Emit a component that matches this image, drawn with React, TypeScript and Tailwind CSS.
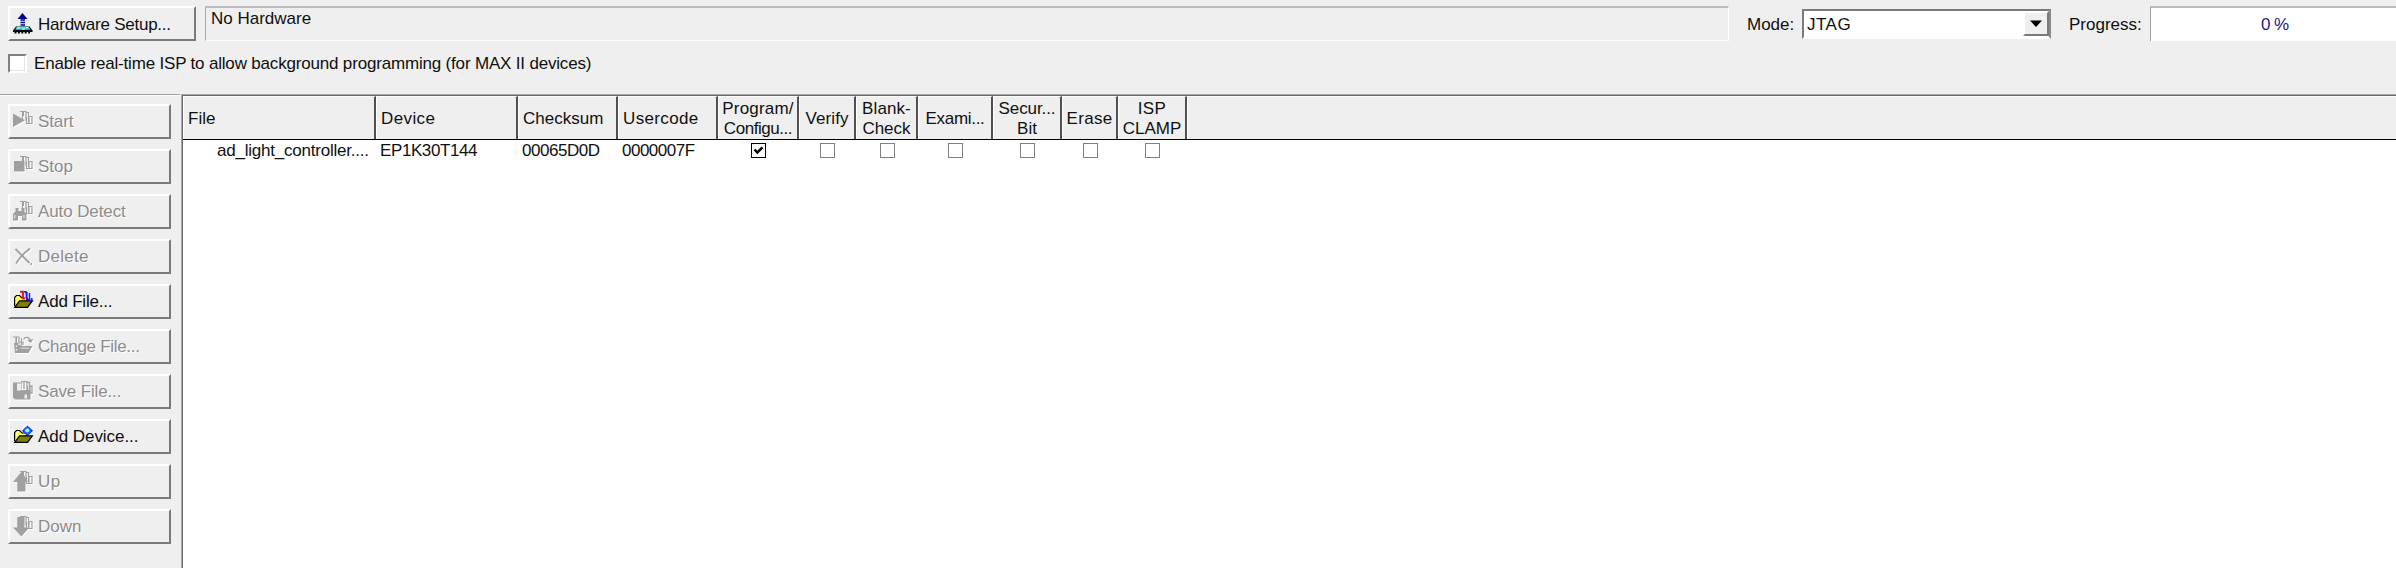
import React from "react";

const raised =
  "border-2 border-t-white border-l-white border-r-[#7a7a7a] border-b-[#7a7a7a]";
const G = "#a0a0a0";

function ChipLegs() {
  return (
    <path
      d="M7 1.500H10.500V6M9.500 1.500V10M10 1.500H13V10.500M13 2.500H15.500V12M13.500 7V13.500H16V6.500H19V13.500H16.500"
      fill="none"
      stroke={G}
      strokeWidth="1.200"
    />
  );
}

function FolderBase() {
  return (
    <>
      <path d="M1.600 16V7.500L3.500 5.500H6.500L9 8H14V11" fill="#ffff66" stroke="#000" strokeWidth="1.200" />
      <path d="M1.800 17.400L6.500 10.800H19.300L14.500 17.400Z" fill="#808000" stroke="#000" strokeWidth="1.300" />
    </>
  );
}

function Icon({ name }: { name: string }) {
  const disabled = !["hardware", "addFile", "addDevice"].includes(name);
  return (
    <svg
      width="20"
      height="23"
      viewBox="0 0 20 23"
      className={disabled ? "shrink-0 overflow-visible drop-shadow-[1px_1px_0_#ffffff]" : "shrink-0 overflow-visible"}
    >
      {name === "hardware" && (
        <>
          <path d="M9.500 1L14.500 7H4.500Z" fill="#000090" />
          <path d="M7.500 8H12M7.500 10.500H12M7.500 13H12" stroke="#000090" strokeWidth="1.300" />
          <path d="M0 18.500L3 14.500H16.500L19.500 18.500V20H0Z" fill="#000" />
          <path d="M2 17.800L4 14.800H15.500L17.500 17.800Z" fill="#30e0e8" />
          <path d="M4 16H7M9 17H12M13 15.500H15" stroke="#d8ffff" strokeWidth="1.200" />
          <path d="M1.500 20.500H18.500" stroke="#000" strokeWidth="2" strokeDasharray="2 1.400" />
        </>
      )}
      {name === "start" && (
        <>
          <path d="M0 3.500L12 10.300L0 17Z" fill={G} />
          <ChipLegs />
        </>
      )}
      {name === "stop" && (
        <>
          <path d="M1 6H11.500V16.500H1Z" fill={G} />
          <ChipLegs />
        </>
      )}
      {name === "detect" && (
        <>
          <path d="M2.500 8H5.500V11H8.500V8H11.500V11.500L13.500 14V20.500H9V16H5V20.500H0V14L2.500 11.500Z" fill={G} />
          <path d="M1.800 15V18.500M11 15V18.500" stroke="#efefef" strokeWidth="1" />
          <ChipLegs />
        </>
      )}
      {name === "delete" && (
        <path d="M2.500 4L16.500 18M17 3.500C11 8 7 12 3 18.500M17.500 19H19" fill="none" stroke={G} strokeWidth="1.800" />
      )}
      {name === "addFile" && (
        <>
          <FolderBase />
          <path d="M7 1.700H10V8.500H12" fill="none" stroke="#f01020" strokeWidth="1.900" />
          <path d="M11 1.700H13V8M14 2V9.500H16M16.500 3V10.500H18.800V8" fill="none" stroke="#1818ff" strokeWidth="1.500" />
          <path d="M12.300 3.500V9M15.200 3V8" stroke="#b8c0ff" strokeWidth="0.900" />
        </>
      )}
      {name === "addDevice" && (
        <>
          <FolderBase />
          <path d="M14.500 0.800L20 5.800L14.500 10.800L9 5.800Z" fill="#0828d8" />
          <circle cx="14.500" cy="5.800" r="3.700" fill="#1060ff" />
          <circle cx="14.300" cy="5.500" r="2.100" fill="#90f8ff" />
        </>
      )}
      {name === "change" && (
        <>
          <path d="M1 8H5V10H8V11H19.500L15.500 18H2Z" fill={G} />
          <path d="M0 2H3V8M3.500 2V9M6 2V9.500M3 2H6.500M8.500 3V10.500M6 7H10V10" fill="none" stroke={G} strokeWidth="1.200" />
          <path d="M10.500 4.500C12 1.500 16.500 1.500 17.500 6M15 5L17.700 7L19.500 4" fill="none" stroke={G} strokeWidth="1.300" />
          <path d="M3.500 10.500V12M3.500 14V15.500" stroke="#f4f4f4" strokeWidth="1.400" />
          <path d="M7.500 13.200H16" stroke="#efefef" strokeWidth="0.800" />
        </>
      )}
      {name === "save" && (
        <>
          <path d="M0 2.500H9V10H17.500V19.500H2L0 17.500Z" fill={G} />
          <path d="M4 3.500H8.500V10.500H4Z" fill="#efefef" />
          <path d="M11.500 14.500H14V18.500H11.500Z" fill="#efefef" />
          <path d="M8 1.700H11V9M11 1.700H14V10M14 2.500H16.500V12M14.500 6V12.500H17V6H19V13H17.500" fill="none" stroke={G} strokeWidth="1.300" />
        </>
      )}
      {name === "up" && (
        <>
          <path d="M8.500 1.800L15 11.500H12.500V21.500H4.300V12H0Z" fill={G} />
          <ChipLegs />
        </>
      )}
      {name === "down" && (
        <>
          <path d="M4.300 2H11.500V12.500H16.500L8.300 21.500L0 12.500H4.300Z" fill={G} />
          <ChipLegs />
        </>
      )}
    </svg>
  );
}

type Action = { label: string; icon: string; track: string; enabled?: boolean };

const actions: Action[] = [
  { label: "Start", icon: "start", track: "tracking-[-0.1px]" },
  { label: "Stop", icon: "stop", track: "tracking-[0px]" },
  { label: "Auto Detect", icon: "detect", track: "tracking-[-0.1px]" },
  { label: "Delete", icon: "delete", track: "tracking-[0.25px]" },
  { label: "Add File...", icon: "addFile", track: "tracking-[-0.2px]", enabled: true },
  { label: "Change File...", icon: "change", track: "tracking-[-0.3px]" },
  { label: "Save File...", icon: "save", track: "tracking-[-0.15px]" },
  { label: "Add Device...", icon: "addDevice", track: "tracking-[-0.05px]", enabled: true },
  { label: "Up", icon: "up", track: "tracking-[0.5px]" },
  { label: "Down", icon: "down", track: "tracking-[0px]" },
];

function ActionButton({ label, icon, track, enabled }: Action) {
  return (
    <button
      disabled={!enabled}
      className={`flex h-[35px] w-[163px] items-start gap-[5px] pl-[3px] text-left ${raised} ${
        enabled ? "text-[#101010]" : "text-[#8c8c8c] [text-shadow:1px_1px_0_#ffffff]"
      }`}
    >
      <span className="mt-1 block">
        <Icon name={icon} />
      </span>
      <span className={`mt-[5px] ${track}`}>{label}</span>
    </button>
  );
}

const grid =
  "grid grid-cols-[193px_142px_100px_100px_81px_57px_62px_75px_69px_56px_69px_1fr]";

const columns = [
  { lines: ["File"], align: "justify-start pl-1", track: ["tracking-[0px]"] },
  { lines: ["Device"], align: "justify-start pl-1", track: ["tracking-[0.4px]"] },
  { lines: ["Checksum"], align: "justify-start pl-1", track: ["tracking-[0px]"] },
  { lines: ["Usercode"], align: "justify-start pl-1", track: ["tracking-[0.35px]"] },
  { lines: ["Program/", "Configu..."], align: "justify-center", track: ["tracking-[0.2px]", "tracking-[-0.45px]"] },
  { lines: ["Verify"], align: "justify-center", track: ["tracking-[0.1px]"] },
  { lines: ["Blank-", "Check"], align: "justify-center", track: ["tracking-[0.1px]", "tracking-[0px]"] },
  { lines: ["Exami..."], align: "justify-center", track: ["tracking-[-0.3px]"] },
  { lines: ["Secur...", "Bit"], align: "justify-center", track: ["tracking-[-0.1px]", "tracking-[0px]"] },
  { lines: ["Erase"], align: "justify-center", track: ["tracking-[0.3px]"] },
  { lines: ["ISP", "CLAMP"], align: "justify-center", track: ["tracking-[0.4px]", "tracking-[0px]"] },
];

function Check({ on = false }: { on?: boolean }) {
  return (
    <div className="flex h-[21px] items-center justify-center">
      <div className={`flex size-[15px] items-center justify-center border bg-white ${on ? "border-black" : "border-[#808080]"}`}>
        {on && (
          <svg width="11" height="11" viewBox="0 0 11 11">
            <path d="M1.500 4.500L4.300 7.500L9.500 2.300" fill="none" stroke="#000" strokeWidth="2.500" />
          </svg>
        )}
      </div>
    </div>
  );
}

export default function App() {
  return (
    <div className="flex h-[568px] w-[2396px] flex-col overflow-hidden bg-[#efefef] font-['Liberation_Sans',sans-serif] text-[17px] leading-[22px] whitespace-nowrap text-[#101010]">
      <div className="flex h-[94px] shrink-0 flex-col pl-2">
        <div className="flex h-[53px] items-start pt-[6px]">
          <button className={`flex h-[35px] w-[188px] items-start gap-[5px] pl-[3px] ${raised}`}>
            <span className="mt-1 block">
              <Icon name="hardware" />
            </span>
            <span className="mt-[6px] tracking-[-0.25px]">Hardware Setup...</span>
          </button>
          <div className="ml-[9px] h-[35px] w-[1524px] border-t-2 border-r border-b border-l border-t-[#bcbcbc] border-r-white border-b-white border-l-[#a8a8a8] pl-[5px]">
            No Hardware
          </div>
          <div className="mt-2 ml-[18px] w-[55px]">Mode:</div>
          <div className="mt-[3px] flex h-[30px] w-[249px] border-2 border-t-[#7a7a7a] border-r-[#8a8a8a] border-b-white border-l-[#7a7a7a] bg-white">
            <div className="mt-[3px] flex-1 pl-[3px] tracking-[0.5px]">JTAG</div>
            <div className={`flex h-[25px] w-[26px] items-center justify-center bg-[#efefef] ${raised}`}>
              <svg width="12" height="8" viewBox="0 0 12 8">
                <path d="M0 0.500H12L6 7Z" fill="#000" />
              </svg>
            </div>
          </div>
          <div className="mt-2 ml-[18px] w-[81px]">Progress:</div>
          <div className="h-[35px] flex-1 border-t-2 border-l border-t-[#bcbcbc] border-l-[#a0a0a0] bg-white pt-[6px] pl-[110px] tracking-[-0.6px] text-[#20208c]">
            0 %
          </div>
        </div>
        <label className="flex items-start">
          <span className="mt-px size-[19px] border-2 border-t-[#808080] border-r-white border-b-white border-l-[#808080] bg-white shadow-[inset_-1px_-1px_0_#e4e4e4]" />
          <span className="ml-[7px] tracking-[-0.18px]">
            Enable real-time ISP to allow background programming (for MAX II devices)
          </span>
        </label>
      </div>
      <div className="flex min-h-0 flex-1">
        <div className="w-[181px] shrink-0 pr-px">
          <div className="h-[10px] border-t border-[#a0a0a0] shadow-[inset_0_1px_0_#fafafa]" />
          <div className="flex flex-col gap-[10px] pl-2">
            {actions.map((a) => (
              <ActionButton key={a.label} {...a} />
            ))}
          </div>
        </div>
        <div className="min-w-0 flex-1 border-t border-l border-[#a8a8a8]">
          <div className="h-full border-t border-l border-[#696969] bg-white">
            <div className={`${grid} h-[44px] border-b border-black bg-[#efefef] leading-5`}>
              {columns.map((c) => (
                <div
                  key={c.lines[0]}
                  className={`flex items-center border-t border-r-2 border-l border-t-white border-r-[#505050] border-l-white pt-[2px] ${c.align}`}
                >
                  <div className="flex flex-col items-center">
                    {c.lines.map((l, i) => (
                      <span key={l} className={c.track[i]}>
                        {l}
                      </span>
                    ))}
                  </div>
                </div>
              ))}
              <div className="border-t border-l border-white" />
            </div>
            <div className={grid}>
              <div className="pl-[34px] tracking-[-0.22px]">ad_light_controller....</div>
              <div className="pl-1 tracking-[-0.4px]">EP1K30T144</div>
              <div className="pl-1 tracking-[-0.45px]">00065D0D</div>
              <div className="pl-1 tracking-[-0.5px]">0000007F</div>
              <Check on />
              <Check />
              <Check />
              <Check />
              <Check />
              <Check />
              <Check />
            </div>
          </div>
        </div>
      </div>
    </div>
  );
}
